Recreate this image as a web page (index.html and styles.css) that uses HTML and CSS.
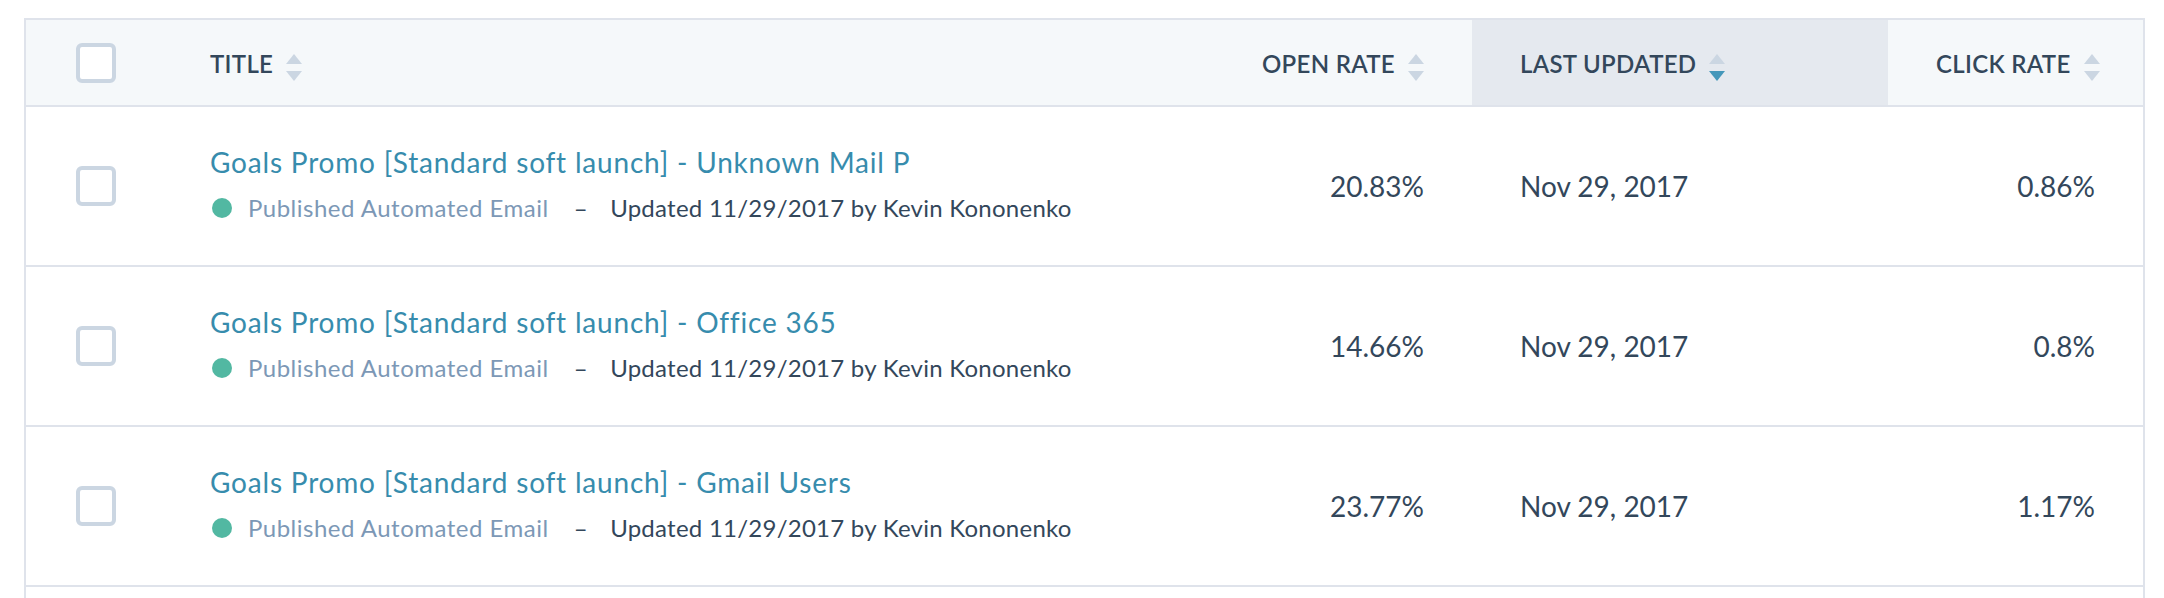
FILE: index.html
```html
<!DOCTYPE html>
<html lang="en">
<head>
  <meta charset="UTF-8">
  <meta name="viewport" content="width=device-width, initial-scale=1.0">
  <title>Automated Emails</title>
  <link rel="stylesheet" href="styles.css">
</head>
<body>
  <div class="table-wrap">
    <table class="email-table">
      <colgroup>
        <col class="col-check">
        <col>
        <col class="col-open">
        <col class="col-updated">
        <col class="col-click">
      </colgroup>
      <thead>
        <tr>
          <th class="cell-check"><span class="checkbox"></span></th>
          <th>Title<svg class="sort-icon" viewBox="0 0 16 27"><path class="up" d="M8 0L16 10H0Z"/><path class="down" d="M0 17H16L8 27Z"/></svg></th>
          <th class="cell-num">Open rate<svg class="sort-icon" viewBox="0 0 16 27"><path class="up" d="M8 0L16 10H0Z"/><path class="down" d="M0 17H16L8 27Z"/></svg></th>
          <th class="is-sorted">Last updated<svg class="sort-icon" viewBox="0 0 16 27"><path class="up" d="M8 0L16 10H0Z"/><path class="down active" d="M0 17H16L8 27Z"/></svg></th>
          <th class="cell-num">Click rate<svg class="sort-icon" viewBox="0 0 16 27"><path class="up" d="M8 0L16 10H0Z"/><path class="down" d="M0 17H16L8 27Z"/></svg></th>
        </tr>
      </thead>
      <tbody>
        <tr>
          <td class="cell-check"><span class="checkbox"></span></td>
          <td class="cell-name">
            <a class="email-name" href="#">Goals Promo [Standard soft launch] - Unknown Mail P</a>
            <div class="email-meta">
              <span class="status-dot"></span>
              <span class="status">Published Automated Email</span>
              <span class="sep">&ndash;</span>
              <span class="updated">Updated 11/29/2017 by Kevin Kononenko</span>
            </div>
          </td>
          <td class="cell-num">20.83%</td>
          <td>Nov 29, 2017</td>
          <td class="cell-num">0.86%</td>
        </tr>
        <tr>
          <td class="cell-check"><span class="checkbox"></span></td>
          <td class="cell-name">
            <a class="email-name" href="#">Goals Promo [Standard soft launch] - Office 365</a>
            <div class="email-meta">
              <span class="status-dot"></span>
              <span class="status">Published Automated Email</span>
              <span class="sep">&ndash;</span>
              <span class="updated">Updated 11/29/2017 by Kevin Kononenko</span>
            </div>
          </td>
          <td class="cell-num">14.66%</td>
          <td>Nov 29, 2017</td>
          <td class="cell-num">0.8%</td>
        </tr>
        <tr>
          <td class="cell-check"><span class="checkbox"></span></td>
          <td class="cell-name">
            <a class="email-name" href="#">Goals Promo [Standard soft launch] - Gmail Users</a>
            <div class="email-meta">
              <span class="status-dot"></span>
              <span class="status">Published Automated Email</span>
              <span class="sep">&ndash;</span>
              <span class="updated">Updated 11/29/2017 by Kevin Kononenko</span>
            </div>
          </td>
          <td class="cell-num">23.77%</td>
          <td>Nov 29, 2017</td>
          <td class="cell-num">1.17%</td>
        </tr>
      </tbody>
    </table>
  </div>
</body>
</html>
```

FILE: styles.css
```css
body {
  margin: 18px 19px 0 24px;
  padding: 0;
  background-color: #ffffff;
  font-family: Lato, "Open Sans", sans-serif;
  color: #33475b;
  overflow: hidden;
}
.table-wrap {
  min-height: 640px;
  border: 2px solid #dfe3eb;
  border-bottom: none;
}
.email-table {
  width: 100%;
  table-layout: fixed;
  border-collapse: separate;
  border-spacing: 0;
}
.col-check {
  width: 136px;
}
.col-open {
  width: 310px;
}
.col-updated {
  width: 416px;
}
.col-click {
  width: 255px;
}
th, td {
  box-sizing: border-box;
  padding: 0 48px;
  border-bottom: 2px solid #dfe3eb;
  text-align: left;
  vertical-align: middle;
  white-space: nowrap;
}
th {
  height: 87px;
  padding-top: 5px;
  background: #f5f8fa;
  font-size: 24px;
  font-weight: 600;
  letter-spacing: 0.3px;
  text-transform: uppercase;
  color: #33475b;
}
th.is-sorted {
  background: #e5e9ef;
}
td {
  height: 160px;
  font-size: 28px;
  color: #33475b;
}
td.cell-name {
  padding-bottom: 4px;
}
.cell-check {
  padding: 0 0 0 50px;
}
th.cell-check {
  padding-top: 0;
}
.cell-num {
  text-align: right;
}
.checkbox {
  display: block;
  width: 40px;
  height: 40px;
  box-sizing: border-box;
  border: 4px solid #cbd6e2;
  border-radius: 6px;
  background: #ffffff;
}
.sort-icon {
  width: 16px;
  height: 27px;
  margin-left: 13px;
  vertical-align: middle;
  fill: #cbd6e2;
}
.sort-icon .active {
  fill: #4497ba;
}
.email-name {
  display: block;
  font-size: 28px;
  line-height: 36px;
  letter-spacing: 0.8px;
  color: #378cad;
  text-decoration: none;
}
.email-meta {
  display: flex;
  align-items: center;
  margin-top: 12px;
  font-size: 24px;
  line-height: 32px;
  letter-spacing: 0.5px;
  color: #33475b;
}
.status-dot {
  width: 20px;
  height: 20px;
  margin: 0 16px 0 2px;
  border-radius: 50%;
  background: #52b8a2;
}
.status {
  color: #7c98b6;
}
.sep {
  margin: 0 22px 0 25px;
}
.updated {
  letter-spacing: 0.25px;
}
```
